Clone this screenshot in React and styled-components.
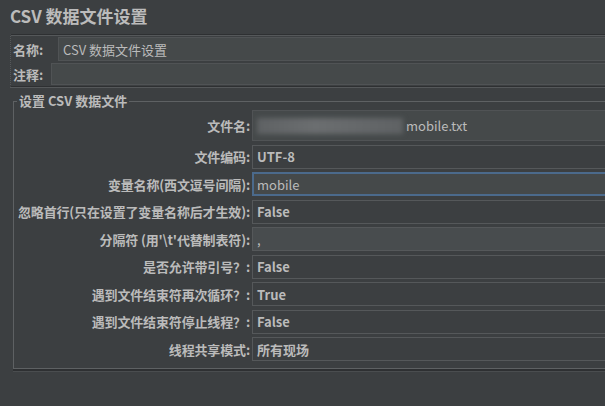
import React from 'react'
import styled, { createGlobalStyle } from 'styled-components'

const COLORS = {
  bg: '#3c3f41',
  text: '#bbbbbb',
  field: '#45494a',
  border: '#5e6163',
  dark: '#2e3032',
  focus: '#4b6a8c',
}

const FONT = '"Noto Sans CJK SC", "Liberation Sans", sans-serif'

const GlobalStyle = createGlobalStyle`
  html, body {
    margin: 0;
    background: ${COLORS.bg};
    overflow: hidden;
  }
  body {
    font-family: ${FONT};
    color: ${COLORS.text};
    font-size: 13px;
  }
`

const Page = styled.div`
  width: 605px;
  height: 406px;
  overflow: hidden;
  padding-top: 3px;
  box-sizing: border-box;
`

const Title = styled.h1`
  margin: 0 0 0 10px;
  font-size: 17px;
  line-height: 26px;
  font-weight: bold;
  color: ${COLORS.text};
`

const NamePanel = styled.div`
  margin: 5px -20px 0 10px;
  border-top: 1px solid ${COLORS.dark};
  border-bottom: 1px solid ${COLORS.dark};
  border-left: 1px dotted #55585a;
  box-shadow: inset 0 1px 0 #55585a, 0 1px 0 #55585a;
  padding: 2px 0 1px 2px;
  display: flex;
  flex-direction: column;
  gap: 2px;
`

const NameRow = styled.div`
  display: flex;
  align-items: center;
  height: ${(p) => p.$h}px;
`

const SmallLabel = styled.span`
  font-weight: bold;
  width: ${(p) => p.$w}px;
  flex: none;
`

const TextField = styled.div`
  flex: 1;
  height: 100%;
  box-sizing: border-box;
  background: ${COLORS.field};
  border: 1px solid ${(p) => (p.$focus ? COLORS.focus : '#505355')};
  box-shadow: ${(p) => (p.$focus ? `inset 0 0 0 1px ${COLORS.focus}` : 'none')};
  display: flex;
  align-items: center;
  padding-left: 4px;
  font-weight: ${(p) => (p.$bold ? 'bold' : 'normal')};
  white-space: nowrap;
  overflow: hidden;
`

const Group = styled.fieldset`
  margin: 6px -20px 0 13px;
  padding: 1px 0 7px 0;
  border: 1px solid ${COLORS.border};
  border-right: none;
  box-shadow: 0 2px 0 ${COLORS.dark}, 0 3px 0 #4a4d4f;
  display: flex;
  flex-direction: column;
  gap: 3.5px;
`

const Legend = styled.legend`
  margin-left: 3px;
  padding: 0 2px;
  font-weight: bold;
  line-height: 16px;
`

const Row = styled.div`
  display: grid;
  grid-template-columns: 236px 1fr;
  column-gap: 2px;
  align-items: center;
  height: ${(p) => p.$h || 24}px;
`

const Label = styled.span`
  text-align: right;
  font-weight: bold;
  white-space: nowrap;
  letter-spacing: -0.15px;
`

const ComboField = styled(TextField)`
  background: ${(p) => (p.$light ? '#484c4e' : COLORS.bg)};
  border-color: #55585a;
`

const Blurred = styled.span`
  display: inline-block;
  width: 146px;
  height: 16px;
  margin-right: 3px;
  background: linear-gradient(90deg, #5f6264, #6b6e70 40%, #5f6264);
  filter: blur(2.5px);
`

const rows = [
  { label: '文件编码:', value: 'UTF-8', bold: true },
  { label: '变量名称(西文逗号间隔):', value: 'mobile', focus: true },
  { label: '忽略首行(只在设置了变量名称后才生效):', value: 'False', bold: true },
  { label: "分隔符 (用'\\t'代替制表符):", value: ',', light: true },
  { label: '是否允许带引号？:', value: 'False', bold: true },
  { label: '遇到文件结束符再次循环？:', value: 'True', bold: true },
  { label: '遇到文件结束符停止线程？:', value: 'False', bold: true },
  { label: '线程共享模式:', value: '所有现场', bold: true },
]

export default function App() {
  return (
    <Page>
      <GlobalStyle />
      <Title>CSV 数据文件设置</Title>
      <NamePanel>
        <NameRow $h={24}>
          <SmallLabel $w={45}>名称:</SmallLabel>
          <TextField>CSV 数据文件设置</TextField>
        </NameRow>
        <NameRow $h={22}>
          <SmallLabel $w={38}>注释:</SmallLabel>
          <TextField />
        </NameRow>
      </NamePanel>
      <Group>
        <Legend>设置 CSV 数据文件</Legend>
        <Row $h={31}>
          <Label>文件名:</Label>
          <TextField>
            <Blurred />
            mobile.txt
          </TextField>
        </Row>
        {rows.map((r) =>
          r.focus ? (
            <Row key={r.label}>
              <Label>{r.label}</Label>
              <TextField $focus>{r.value}</TextField>
            </Row>
          ) : (
            <Row key={r.label}>
              <Label>{r.label}</Label>
              <ComboField $bold={r.bold} $light={r.light}>
                {r.value}
              </ComboField>
            </Row>
          )
        )}
      </Group>
    </Page>
  )
}
